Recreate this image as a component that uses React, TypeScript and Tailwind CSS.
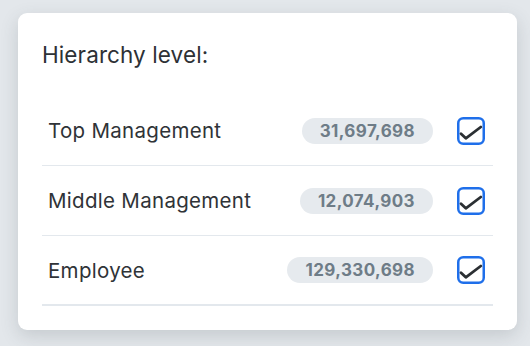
const rows = [
  { label: 'Top Management', count: '31,697,698' },
  { label: 'Middle Management', count: '12,074,903' },
  { label: 'Employee', count: '129,330,698' },
];

function Check() {
  return (
    <svg viewBox="0 0 28 28" className="size-[28px] shrink-0" fill="none">
      <rect x="1.25" y="1.25" width="25.5" height="25.5" rx="5" stroke="#1f6fea" strokeWidth="2.5" />
      <path d="M4 16.8L8.8 21.3L23.8 10" stroke="#2b2f33" strokeWidth="2.8" strokeLinecap="round" strokeLinejoin="round" />
    </svg>
  );
}

export default function App() {
  return (
    <div className="min-h-[346px] bg-[#e3e7eb] pt-[13px] pl-[18px]" style={{ fontFamily: 'Inter, "Noto Sans", sans-serif' }}>
      <div className="w-[499px] rounded-[9px] bg-white px-[24px] pt-[28px] pb-[24px] shadow-[0_6px_18px_rgba(60,70,80,0.18)]">
        <h2 className="text-[22.5px] leading-[28px] tracking-[0.1px] text-[#2d3135]">Hierarchy level:</h2>
        <div className="mt-[27px]">
          {rows.map((r, i) => (
            <div
              key={r.label}
              className={`flex h-[70px] items-center border-b border-[#e3e8ed] pr-[8px] pl-[6px] ${i === rows.length - 1 ? 'border-b-2' : ''}`}
            >
              <span className="flex-1 pt-[2px] text-[20.5px] tracking-[0.3px] text-[#2f3337]">{r.label}</span>
              <span className="mr-[24px] rounded-full bg-[#e6eaee] px-[18px] py-[3px] text-[17px] leading-[20px] font-bold tracking-[0.4px] text-[#6e7c87]">
                {r.count}
              </span>
              <Check />
            </div>
          ))}
        </div>
      </div>
    </div>
  );
}
